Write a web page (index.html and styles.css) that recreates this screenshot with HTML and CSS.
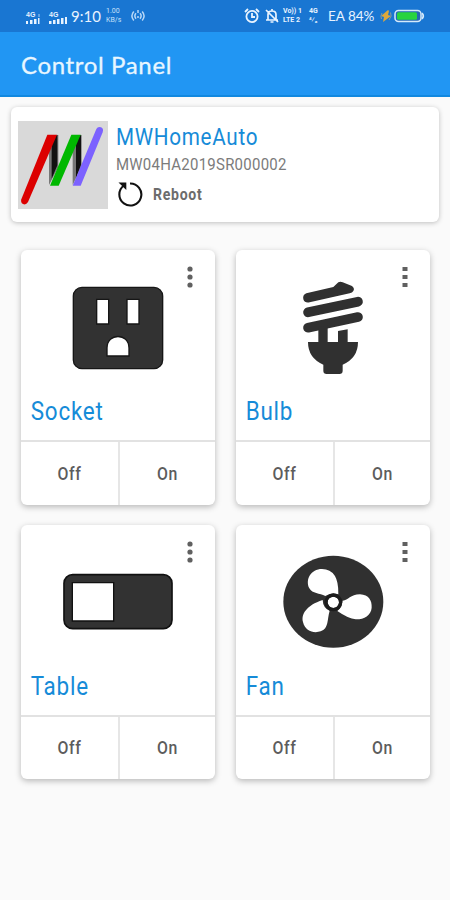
FILE: index.html
```html
<!DOCTYPE html>
<html lang="en">
<head>
<meta charset="utf-8">
<title>Control Panel</title>
<link rel="stylesheet" href="styles.css">
</head>
<body>
<div class="status">
  <svg class="signal" width="44" height="18" viewBox="0 0 44 18" fill="#e8f3ff">
    <path d="M1 12h2v3H1zM5 11h2.5v4H5zM9 10h2.5v5H9zM13 9h1.5v6H13z"/>
    <path opacity=".35" d="M13 5h2v3h-2z"/>
    <path d="M24 12h2.5v3H24zM28 11h2.5v4H28zM32 10h2.5v5H32zM36 9h2.5v6H36zM40 8h2v7h-2z"/>
    <text x="1" y="7.5" class="mini">4G</text><text x="24" y="7.5" class="mini">4G</text>
  </svg>
  <span class="clock">9:10</span>
  <span class="rate"><span>1.00</span><span>KB/s</span></span>
  <svg class="hotspot" width="16" height="14" viewBox="0 0 16 14" fill="none" stroke="#b9d8f7" stroke-width="1.5">
    <path d="M3.8 2.5Q0 7 3.8 11.5M6 4.3Q3.7 7 6 9.7M12.2 2.5Q16 7 12.2 11.5M10 4.3Q12.3 7 10 9.7M8 1v3M7 8h2"/>
  </svg>
  <svg class="alarm" width="16" height="16" viewBox="0 0 16 16" fill="none" stroke="#e8f3ff" stroke-width="1.8">
    <circle cx="8" cy="8.5" r="5.6"/><path d="M8 5v4h3M1 4l3-3M15 4l-3-3"/>
  </svg>
  <svg class="bell" width="14" height="16" viewBox="0 0 14 16" fill="none" stroke="#e8f3ff" stroke-width="1.7">
    <path d="M3 12V6.5Q3 3 7 3t4 3.5V12M1 12h12M7 1v2M5.5 14h3M1 2l12 12"/>
  </svg>
  <span class="stack volte"><span>Vo)) 1</span><span>LTE 2</span></span>
  <span class="stack net"><span>4G</span><span>⁴⁄₆</span></span>
  <span class="percent">EA 84%</span>
  <svg class="bolt" width="12" height="12" viewBox="0 0 12 12"><path d="M8 0L1 6l3 1-1 5 8-6-3-1 1-4z" fill="#dda83c"/><path d="M10.5 2.5Q12.5 6 9 10M1.5 9Q0 6 2 3" fill="none" stroke="#8f9b91"/></svg>
  <svg class="battery" width="31" height="14" viewBox="0 0 31 14"><rect x="1" y="1.5" width="26" height="11" rx="3.5" fill="#2468b5" stroke="#d5eafb" stroke-width="1.5"/><rect x="3" y="3.3" width="20" height="7.4" rx="1.5" fill="#27d440"/><path d="M28 4.2q2.6 2.8 0 5.6" fill="none" stroke="#d5eafb" stroke-width="1.7"/></svg>
</div>
<header class="appbar"><h1>Control Panel</h1></header>
<main>
  <section class="device">
    <svg class="logo" width="90" height="88" viewBox="0 0 270 264">
      <path fill="#d9d9d9" d="M0 0h270v264H0z"/>
      <path fill="#777" d="M93 42h28v96l-28 54zM164 42h27v94l-27 56z"/>
      <path fill="#111" d="M101 55l17-14v92l-17 40zM174 55l15-14v90l-15 40z"/>
      <path fill="#dc0000" d="M88 41h29L30 243q-6 10-15 6-8-4-5-14z"/>
      <path fill="#00b800" d="M160 41h28l-66 153H96z"/>
      <path fill="#7c62ff" d="M235 24q5-9 14-5t5 15l-66 160h-24z"/>
    </svg>
    <div class="info">
      <span class="name cond">MWHomeAuto</span>
      <span class="serial cond">MW04HA2019SR000002</span>
      <div class="reboot">
        <svg width="27" height="26" viewBox="0 0 27 26"><path d="M8 4.5A11 11 0 1 0 14 2.5" fill="none" stroke="#111" stroke-width="2.1"/><path d="M2.5 1.5h7.8v7.5z" fill="#111"/></svg>
        <span class="cond">Reboot</span>
      </div>
    </div>
  </section>
  <section class="tiles">
    <article class="tile">
      <svg class="menu" width="6" height="22" viewBox="0 0 6 22"><circle cx="3" cy="3" r="2.6"/><circle cx="3" cy="11" r="2.6"/><circle cx="3" cy="19" r="2.6"/></svg>
      <svg class="art" viewBox="0 0 194 140"><g transform="translate(-11 -10) scale(.33333)">
        <rect x="190" y="142" width="268" height="244" rx="26" fill="#323232" stroke="#161616" stroke-width="4"/>
        <path fill="#fff" stroke="#161616" stroke-width="4" d="M260 178h36v74h-36zM351 178h36v74h-36zM291 348v-24c0-46 66-46 66 0v24z"/>
      </g></svg>
      <h2 class="cond">Socket</h2>
      <div class="actions"><button><span class="cond">Off</span></button><button><span class="cond">On</span></button></div>
    </article>
    <article class="tile">
      <svg class="menu" width="6" height="22" viewBox="0 0 6 22"><path d="M.5 1h5v4h-5zM.5 9h5v4h-5zM.5 17h5v4h-5z"/></svg>
      <svg class="art" viewBox="0 0 194 140"><g transform="translate(-11 -10) scale(.33333)" fill="#303030">
        <path d="M244 160L325 141L340 127Q346 123 353 127L381 138Q390 145 385 153Q382 158 374 160L254 187Q239 190 235 178Q232 165 244 160z"/>
        <path d="M249 217L399 185M249 263L399 231" stroke="#303030" stroke-width="29" stroke-linecap="round"/>
        <path d="M280 262l28-6v50h31v-33l29-5v38h31q0 48-46 68v18q0 10-10 10h-38q-10 0-10-10v-18q-46-20-46-68h31z"/>
      </g></svg>
      <h2 class="cond">Bulb</h2>
      <div class="actions"><button><span class="cond">Off</span></button><button><span class="cond">On</span></button></div>
    </article>
    <article class="tile">
      <svg class="menu" width="6" height="22" viewBox="0 0 6 22"><circle cx="3" cy="3" r="2.6"/><circle cx="3" cy="11" r="2.6"/><circle cx="3" cy="19" r="2.6"/></svg>
      <svg class="art" viewBox="0 0 194 140"><g transform="translate(-11 -5) scale(.33333)">
        <rect x="162" y="164" width="324" height="162" rx="26" fill="#323232" stroke="#111" stroke-width="5"/>
        <path fill="#fff" stroke="#111" stroke-width="4" d="M187 188h124v115H187z"/>
      </g></svg>
      <h2 class="cond">Table</h2>
      <div class="actions"><button><span class="cond">Off</span></button><button><span class="cond">On</span></button></div>
    </article>
    <article class="tile">
      <svg class="menu" width="6" height="22" viewBox="0 0 6 22"><path d="M.5 1h5v4h-5zM.5 9h5v4h-5zM.5 17h5v4h-5z"/></svg>
      <svg class="art" viewBox="0 0 194 140"><g transform="translate(-11 -5) scale(.33333)">
        <ellipse cx="325" cy="245" rx="150" ry="138" fill="#303030"/>
        <g fill="#fff">
          <path d="M340 223Q342 148 291 147C258 147 240 178 253 205C262 222 284 219 301 228Q318 216 340 223z"/>
          <path d="M353 242C370 241 376 223 405 223C432 224 441 242 440 263C438 287 416 299 392 298Q370 296 337 273Q350 262 353 242z"/>
          <path d="M293 240C244 256 228 283 234 306C240 333 266 341 287 334C312 325 306 298 314 272Q294 264 293 240z"/>
          <circle cx="325" cy="247" r="17"/>
        </g>
        <circle cx="325" cy="247" r="22" fill="none" stroke="#1c1c1c" stroke-width="10"/>
      </g></svg>
      <h2 class="cond">Fan</h2>
      <div class="actions"><button><span class="cond">Off</span></button><button><span class="cond">On</span></button></div>
    </article>
  </section>
</main>
</body>
</html>
```
FILE: styles.css
```css
* { box-sizing: border-box; }
body { margin: 0; width: 450px; height: 900px; overflow: hidden; background: #fafafa; font-family: Roboto, sans-serif; }
svg { display: block; flex: none; }
.status { height: 32px; background: #1976d2; color: #e8f3ff; display: flex; align-items: center; padding-left: 25px; font-family: Lato, sans-serif; white-space: nowrap; }
.signal { margin-top: 4px; overflow: visible; }
.mini { font: bold 7px "Liberation Sans", sans-serif; }
.clock { width: 31px; margin-left: 2px; font-size: 15px; }
.rate, .stack { display: flex; flex-direction: column; font: 7px/9px Roboto, sans-serif; }
.rate { width: 18px; margin-left: 4px; color: #c9e1f9; }
.hotspot { margin-left: 6px; }
.alarm { margin-left: 98px; }
.bell { margin-left: 5px; }
.stack { font-weight: bold; }
.volte { width: 23px; margin-left: 4px; }
.net { width: 14px; margin-left: 3px; }
.percent { width: 47px; margin-left: 5px; font-size: 13.5px; }
.bolt { margin-left: 5px; }
.battery { margin-left: 2px; }
.appbar { height: 65px; padding: 0 21px; background: #2196f3; border-bottom: 2px solid #1188df; display: flex; align-items: center; }
.appbar h1 { margin: 2px 0 0; font: 400 24px/30px Lato, sans-serif; letter-spacing: .65px; color: #e8f6ff; -webkit-text-stroke: .3px #e8f6ff; }
main { padding: 10px 11px 0; }
.device { height: 115px; padding: 14px 7px; background: #fff; border-radius: 6px; box-shadow: 0 1px 5px rgba(0,0,0,.24); display: flex; gap: 8px; }
.info { display: flex; flex-direction: column; }
.cond { display: block; white-space: nowrap; transform: scaleX(.88); transform-origin: left; }
.name { font-size: 23.5px; line-height: 33px; letter-spacing: .8px; color: #168bd8; }
.serial { font-size: 17px; line-height: 20px; letter-spacing: .3px; color: #7b7b7b; }
.reboot { margin-top: 7px; display: flex; align-items: center; gap: 10px; font-size: 16px; font-weight: 700; letter-spacing: .8px; color: #6c6c6c; }
.tiles { padding: 28px 10px 0; display: grid; grid-template: 255px 254px / 194px 194px; gap: 20px 21px; }
.tile { position: relative; background: #fff; border-radius: 6px; box-shadow: 0 2px 6px rgba(0,0,0,.27); display: flex; flex-direction: column; }
.menu { position: absolute; top: 16px; right: 22px; fill: #606060; }
.art { width: 194px; height: 140px; }
.tile h2 { height: 50px; margin: 0; padding-left: 11px; font-size: 25.5px; font-weight: 400; line-height: 42px; letter-spacing: .9px; color: #168bd8; }
.actions { flex: 1; display: grid; grid-template-columns: 1fr 1fr; border-top: 2px solid #e2e2e2; }
.actions button { border: 0; padding: 0; background: none; font: 500 18px/20px Roboto, sans-serif; letter-spacing: .7px; color: #5c5c5c; }
.actions button + button { border-left: 2px solid #e6e6e6; }
.actions .cond { transform-origin: center; }
```
